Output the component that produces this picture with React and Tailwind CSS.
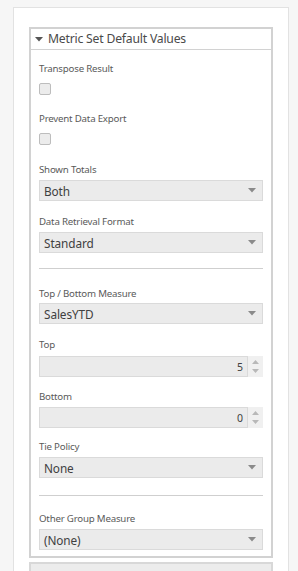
import React from "react";

const font = { fontFamily: '"Noto Sans", "Open Sans", sans-serif' };

function Label({ children, className = "" }) {
  return (
    <div className={`h-[14px] text-[9.7px] leading-[14px] text-[#5a5a5a] tracking-[-0.2px] ${className}`}>
      {children}
    </div>
  );
}

function Select({ value, className = "" }) {
  return (
    <div className={`h-[21px] flex items-center justify-between border border-[#dadada] bg-[#ebebeb] pl-[4px] pr-[6px] ${className}`}>
      <span className="text-[11.8px] leading-[16px] text-[#404040] tracking-[-0.1px]">{value}</span>
      <svg width="8" height="5" viewBox="0 0 8 5">
        <path d="M0 0 L8 0 L4 4.5 Z" fill="#8a8a8a" />
      </svg>
    </div>
  );
}

function Spin({ value, className = "" }) {
  return (
    <div className={`h-[21px] flex ${className}`}>
      <div className="flex-1 flex items-center justify-end border border-[#dadada] bg-[#ebebeb] pr-[4px]">
        <span className="text-[10.5px] leading-[14px] text-[#404040]">{value}</span>
      </div>
      <div className="w-[15px] flex flex-col items-center justify-center gap-[5px] bg-[#f0f0f0]">
        <svg width="7" height="4" viewBox="0 0 7 4">
          <path d="M0 4 L7 4 L3.5 0 Z" fill="#b8b8b8" />
        </svg>
        <svg width="7" height="4" viewBox="0 0 7 4">
          <path d="M0 0 L7 0 L3.5 4 Z" fill="#b8b8b8" />
        </svg>
      </div>
    </div>
  );
}

function Check({ className = "" }) {
  return <div className={`w-[12px] h-[12px] rounded-[2px] border border-[#bdbdbd] bg-[#ececec] ${className}`} />;
}

export default function App() {
  return (
    <div className="w-[298px] h-[571px] overflow-hidden bg-[#f6f6f6] pl-[13px] pt-[7px]" style={font}>
      <div className="w-[276px] h-[600px] border border-[#e2e2e2] bg-white pl-[15px] pt-[19px]">
        <div className="w-[244px] border-2 border-[#d2d2d2]">
          <div className="h-[21px] flex items-center border-b border-[#d2d2d2] pl-[4px]">
            <svg width="8" height="5" viewBox="0 0 8 5" className="mr-[5px]">
              <path d="M0 0 L8 0 L4 4.5 Z" fill="#555" />
            </svg>
            <span className="text-[12.2px] leading-[16px] text-[#4a4a4a] tracking-[-0.2px]">Metric Set Default Values</span>
          </div>
          <div className="px-[8px] pb-[6px]">
            <Label className="mt-[12px]">Transpose Result</Label>
            <Check className="mt-[7px]" />
            <Label className="mt-[17px]">Prevent Data Export</Label>
            <Check className="mt-[7px]" />
            <Label className="mt-[18px]">Shown Totals</Label>
            <Select value="Both" className="mt-[3px]" />
            <Label className="mt-[14px]">Data Retrieval Format</Label>
            <Select value="Standard" className="mt-[3px]" />
            <div className="mt-[15px] h-px bg-[#cfcfcf]" />
            <Label className="mt-[18px]">Top / Bottom Measure</Label>
            <Select value="SalesYTD" className="mt-[2px]" />
            <Label className="mt-[14px]">Top</Label>
            <Spin value="5" className="mt-[4px]" />
            <Label className="mt-[13px]">Bottom</Label>
            <Spin value="0" className="mt-[3px]" />
            <Label className="mt-[12px]">Tie Policy</Label>
            <Select value="None" className="mt-[3px]" />
            <div className="mt-[17px] h-px bg-[#cfcfcf]" />
            <Label className="mt-[16px]">Other Group Measure</Label>
            <Select value="(None)" className="mt-[3px]" />
          </div>
        </div>
        <div className="mt-[4px] w-[244px] h-[20px] border-2 border-[#d8d8d8] bg-[#ececec]" />
      </div>
    </div>
  );
}
